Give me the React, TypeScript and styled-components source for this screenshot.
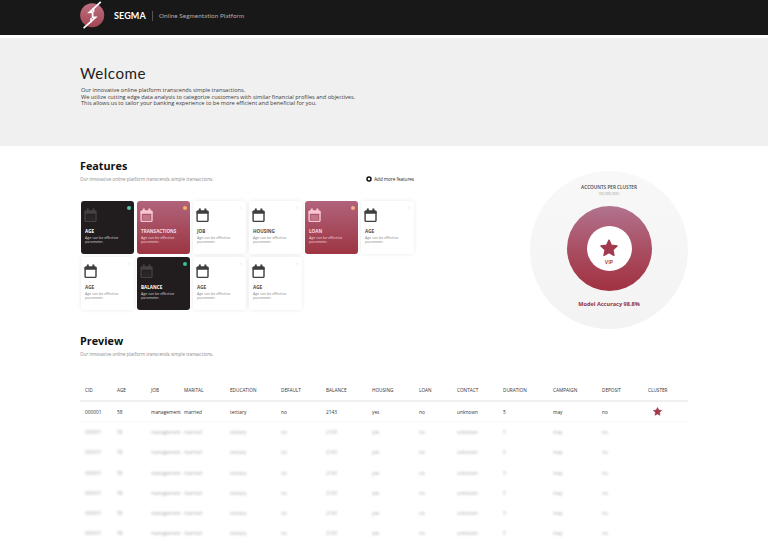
import React from 'react';
import styled, { createGlobalStyle, css } from 'styled-components';

const GlobalStyle = createGlobalStyle`
  * { box-sizing: border-box; }
  body {
    margin: 0;
    background: #fff;
    color: #1c1c1c;
    font-family: "Open Sans", sans-serif;
    overflow: hidden;
  }
  h1, h2, h3, p { margin: 0; }
`;

const Page = styled.div`
  height: 543px;
  overflow: hidden;
  display: flex;
  flex-direction: column;
`;

const Header = styled.header`
  flex: none;
  height: 35px;
  padding: 0 80px;
  display: flex;
  background: #181818;
  color: #fff;
`;

const LogoSvg = styled.svg`
  flex: none;
  width: 26px;
  height: 30px;
`;

const Brand = styled.div`
  width: 38px;
  margin-left: 8px;
  font: 700 9px/32px "Lato", sans-serif;
  letter-spacing: 0.1px;
  white-space: nowrap;
`;

const Tagline = styled.div`
  height: 10px;
  margin-top: 11px;
  padding-left: 6px;
  border-left: 1px solid #555;
  font: 400 6.3px/10px "Lato", sans-serif;
  letter-spacing: 0.06px;
  color: #b0b0b0;
  white-space: nowrap;
`;

const Banner = styled.section`
  flex: none;
  height: 108px;
  margin-top: 3px;
  padding: 25px 80px 0;
  background: #f0f0f0;
`;

const Welcome = styled.h1`
  font: 400 15.2px/20px "Lato", sans-serif;
  letter-spacing: 0.45px;
  color: #222;
`;

const Intro = styled.p`
  margin: 4px 0 0 1px;
  font-size: 5.6px;
  line-height: 6.7px;
  color: #3a3a3a;
  white-space: nowrap;
`;

const Main = styled.main`
  padding: 0 80px;
`;

const Overview = styled.div`
  display: grid;
  grid-template-columns: 334px 158px;
  justify-content: space-between;
  height: 184px;
`;

const SectionTitle = styled.h2`
  font-size: 10.8px;
  line-height: 15px;
  font-weight: 700;
  color: #111;
`;

const SectionText = styled.p`
  font-size: 4.55px;
  line-height: 8px;
  color: #8a8a8a;
  white-space: nowrap;
`;

const FeatureSection = styled.section`
  padding-top: 12px;
`;

const FeatureBar = styled.div`
  display: flex;
  justify-content: space-between;
  align-items: center;
  height: 12px;
`;

const AddButton = styled.button`
  display: flex;
  align-items: center;
  gap: 2px;
  padding: 0;
  border: 0;
  background: none;
  font: 400 4.55px/8px "Open Sans", sans-serif;
  color: #222;
  white-space: nowrap;
  svg { width: 6px; height: 6px; }
`;

const Cards = styled.div`
  display: grid;
  grid-template-columns: repeat(6, 53px);
  grid-auto-rows: 53px;
  gap: 3px;
  margin: 16px 0 0 1px;
`;

type Tone = 'light' | 'dark' | 'red';

const tones = {
  light: css`
    background: #fff;
    color: #4a4a4a;
    box-shadow: 0 0 4px rgba(0, 0, 0, 0.09);
  `,
  dark: css`
    background: #211c1e;
    color: #fff;
  `,
  red: css`
    background: linear-gradient(#b0637b, #9d3542);
    color: #fbdde4;
  `,
};

const Card = styled.article<{ $tone: Tone }>`
  position: relative;
  padding: 7px 0 0 3px;
  border-radius: 3px;
  ${({ $tone }) => tones[$tone]}
`;

const CardDot = styled.span<{ $color: string }>`
  position: absolute;
  top: 5px;
  right: 3px;
  width: 4px;
  height: 4px;
  border-radius: 50%;
  background: ${({ $color }) => $color};
`;

const CalendarSvg = styled.svg<{ $tone: Tone }>`
  display: block;
  width: 13px;
  height: 15px;
  color: ${({ $tone }) => ({ light: '#3d3d3d', dark: '#454042', red: '#fac6d5' })[$tone]};
`;

const CardName = styled.h3`
  margin: 5px 0 0 1px;
  font-size: 4.6px;
  line-height: 7px;
  font-weight: 700;
`;

const CardText = styled.p<{ $tone: Tone }>`
  font-size: 3.6px;
  line-height: 4.4px;
  margin: 1px 0 0 1px;
  color: ${({ $tone }) => ({ light: '#888', dark: '#d5d2d3', red: '#f3d3da' })[$tone]};
  white-space: nowrap;
`;

const Cluster = styled.aside`
  display: flex;
  flex-direction: column;
  align-items: center;
  width: 158px;
  height: 158px;
  margin-top: 25px;
  padding-top: 13px;
  border-radius: 50%;
  background: linear-gradient(#f8f8f8, #f3f3f3);
`;

const ClusterTitle = styled.h3`
  font-size: 4.7px;
  line-height: 7px;
  font-weight: 600;
  color: #444;
`;

const ClusterNote = styled.p`
  font-size: 3.6px;
  line-height: 5px;
  color: #999;
`;

const Ring = styled.div`
  display: grid;
  place-items: center;
  width: 85px;
  height: 85px;
  margin-top: 10px;
  border-radius: 50%;
  background: linear-gradient(#b1738e, #a94c60 55%, #a03140);
`;

const RingCenter = styled.div`
  display: flex;
  flex-direction: column;
  align-items: center;
  width: 45px;
  height: 45px;
  padding-top: 13px;
  border-radius: 50%;
  background: #fff;
  color: #8d3046;
  font-size: 5.4px;
  line-height: 11px;
  font-weight: 600;
`;

const StarSvg = styled.svg<{ $size: number }>`
  display: block;
  width: ${({ $size }) => $size}px;
  height: ${({ $size }) => $size}px;
`;

const Accuracy = styled.p`
  margin-top: 9px;
  font-size: 5.6px;
  line-height: 8px;
  font-weight: 700;
  color: #913249;
`;

const Preview = styled.section`
  padding-top: 3px;
`;

const PreviewText = styled(SectionText)`
  margin-top: 2px;
`;

const Table = styled.div`
  margin-top: 21px;
`;

const columns = '32px 34px 33px 46px 51px 45px 46px 47px 38px 46px 50px 49px 46px 40px';

const Row = styled.div<{ $kind: 'head' | 'active' | 'muted' }>`
  display: grid;
  grid-template-columns: ${columns};
  align-items: center;
  width: 608px;
  height: 20.2px;
  padding-left: 5px;
  font-size: 4.8px;
  line-height: 8px;
  white-space: nowrap;
  ${({ $kind }) =>
    $kind === 'head' &&
    css`
      height: 23px;
      font-size: 4.7px;
      font-weight: 500;
      color: #333;
      border-bottom: 2px solid #f0f0f0;
    `}
  ${({ $kind }) =>
    $kind === 'active' &&
    css`
      color: #333;
      border-bottom: 1px solid #fafafa;
    `}
  ${({ $kind }) =>
    $kind === 'muted' &&
    css`
      color: #888;
      span { filter: blur(0.9px); opacity: 0.7; }
    `}
`;

const StarCell = styled.div`
  padding-left: 5px;
`;

const Logo = () => (
  <LogoSvg viewBox="0 0 26 30">
    <defs>
      <linearGradient id="logoFill" x1="0" y1="0" x2="0" y2="1">
        <stop offset="0" stopColor="#bd7181" />
        <stop offset="1" stopColor="#a34452" />
      </linearGradient>
    </defs>
    <circle cx="12.2" cy="15.2" r="12" fill="url(#logoFill)" />
    <path d="M20.8 1.8 9.3 12.4H12.6V17.4H15.6L3.6 28.2" fill="none" stroke="#fff" strokeWidth="1.7" />
    <path d="M13.6 8V12M11 18V22.6" fill="none" stroke="#fff" strokeWidth="1.5" />
  </LogoSvg>
);

const Calendar = ({ tone }: { tone: Tone }) => (
  <CalendarSvg $tone={tone} viewBox="0 0 13 15">
    <rect x="1.1" y="3" width="10.9" height="10.4" rx="1" fill="none" stroke="currentColor" strokeWidth="1.4" />
    <path d="M.7 3h11.7v2.7H.7zM2.8.6h2v3h-2zM8.4.6h2v3h-2z" fill="currentColor" />
    {tone !== 'light' && <path d="M2.6 7h7.8v5H2.6z" fill="currentColor" opacity=".3" />}
  </CalendarSvg>
);

const Star = ({ size }: { size: number }) => (
  <StarSvg $size={size} viewBox="0 0 20 20">
    <path
      d="M10 1.2 12.7 6.9 19 7.7 14.4 12 15.6 18.3 10 15.3 4.4 18.3 5.6 12 1 7.7 7.3 6.9Z"
      fill="#a23a4d"
      stroke="#a23a4d"
      strokeWidth="1.4"
      strokeLinejoin="round"
    />
  </StarSvg>
);

const features: { name: string; tone: Tone; dot?: string }[] = [
  { name: 'AGE', tone: 'dark', dot: '#55c9a5' },
  { name: 'TRANSACTIONS', tone: 'red', dot: '#efb45c' },
  { name: 'JOB', tone: 'light' },
  { name: 'HOUSING', tone: 'light' },
  { name: 'LOAN', tone: 'red', dot: '#f2b280' },
  { name: 'AGE', tone: 'light' },
  { name: 'AGE', tone: 'light' },
  { name: 'BALANCE', tone: 'dark', dot: '#35c19a' },
  { name: 'AGE', tone: 'light' },
  { name: 'AGE', tone: 'light' },
];

const headings = [
  'CID', 'AGE', 'JOB', 'MARITAL', 'EDUCATION', 'DEFAULT', 'BALANCE',
  'HOUSING', 'LOAN', 'CONTACT', 'DURATION', 'CAMPAIGN', 'DEPOSIT', 'CLUSTER',
];

const record = [
  '000001', '58', 'management', 'married', 'tertiary', 'no', '2143',
  'yes', 'no', 'unknown', '5', 'may', 'no',
];

export default function App() {
  return (
    <>
      <GlobalStyle />
      <Page>
        <Header>
          <Logo />
          <Brand>SEGMA</Brand>
          <Tagline>Online Segmentation Platform</Tagline>
        </Header>
        <Banner>
          <Welcome>Welcome</Welcome>
          <Intro>
            Our innovative online platform transcends simple transactions.
            <br />
            We utilize cutting edge data analysis to categorize customers with similar financial profiles and objectives.
            <br />
            This allows us to tailor your banking experience to be more efficient and beneficial for you.
          </Intro>
        </Banner>
        <Main>
          <Overview>
            <FeatureSection>
              <SectionTitle>Features</SectionTitle>
              <FeatureBar>
                <SectionText>Our innovative online platform transcends simple transactions.</SectionText>
                <AddButton>
                  <svg viewBox="0 0 12 12">
                    <circle cx="6" cy="6" r="4" fill="none" stroke="#111" strokeWidth="3" />
                  </svg>
                  Add more features
                </AddButton>
              </FeatureBar>
              <Cards>
                {features.map(({ name, tone, dot }, i) => (
                  <Card key={i} $tone={tone}>
                    <CardDot $color={dot ?? '#f8f8f8'} />
                    <Calendar tone={tone} />
                    <CardName>{name}</CardName>
                    <CardText $tone={tone}>
                      Age can be effective
                      <br />
                      parameter.
                    </CardText>
                  </Card>
                ))}
              </Cards>
            </FeatureSection>
            <Cluster>
              <ClusterTitle>ACCOUNTS PER CLUSTER</ClusterTitle>
              <ClusterNote>(30,000,000)</ClusterNote>
              <Ring>
                <RingCenter>
                  <Star size={18} />
                  VIP
                </RingCenter>
              </Ring>
              <Accuracy>Model Accuracy 98.8%</Accuracy>
            </Cluster>
          </Overview>
          <Preview>
            <SectionTitle>Preview</SectionTitle>
            <PreviewText>Our innovative online platform transcends simple transactions.</PreviewText>
            <Table>
              <Row $kind="head">
                {headings.map((h) => <span key={h}>{h}</span>)}
              </Row>
              <Row $kind="active">
                {record.map((v, i) => <span key={i}>{v}</span>)}
                <StarCell><Star size={9} /></StarCell>
              </Row>
              {Array.from({ length: 6 }, (_, r) => (
                <Row key={r} $kind="muted">
                  {record.map((v, i) => <span key={i}>{v}</span>)}
                </Row>
              ))}
            </Table>
          </Preview>
        </Main>
      </Page>
    </>
  );
}
